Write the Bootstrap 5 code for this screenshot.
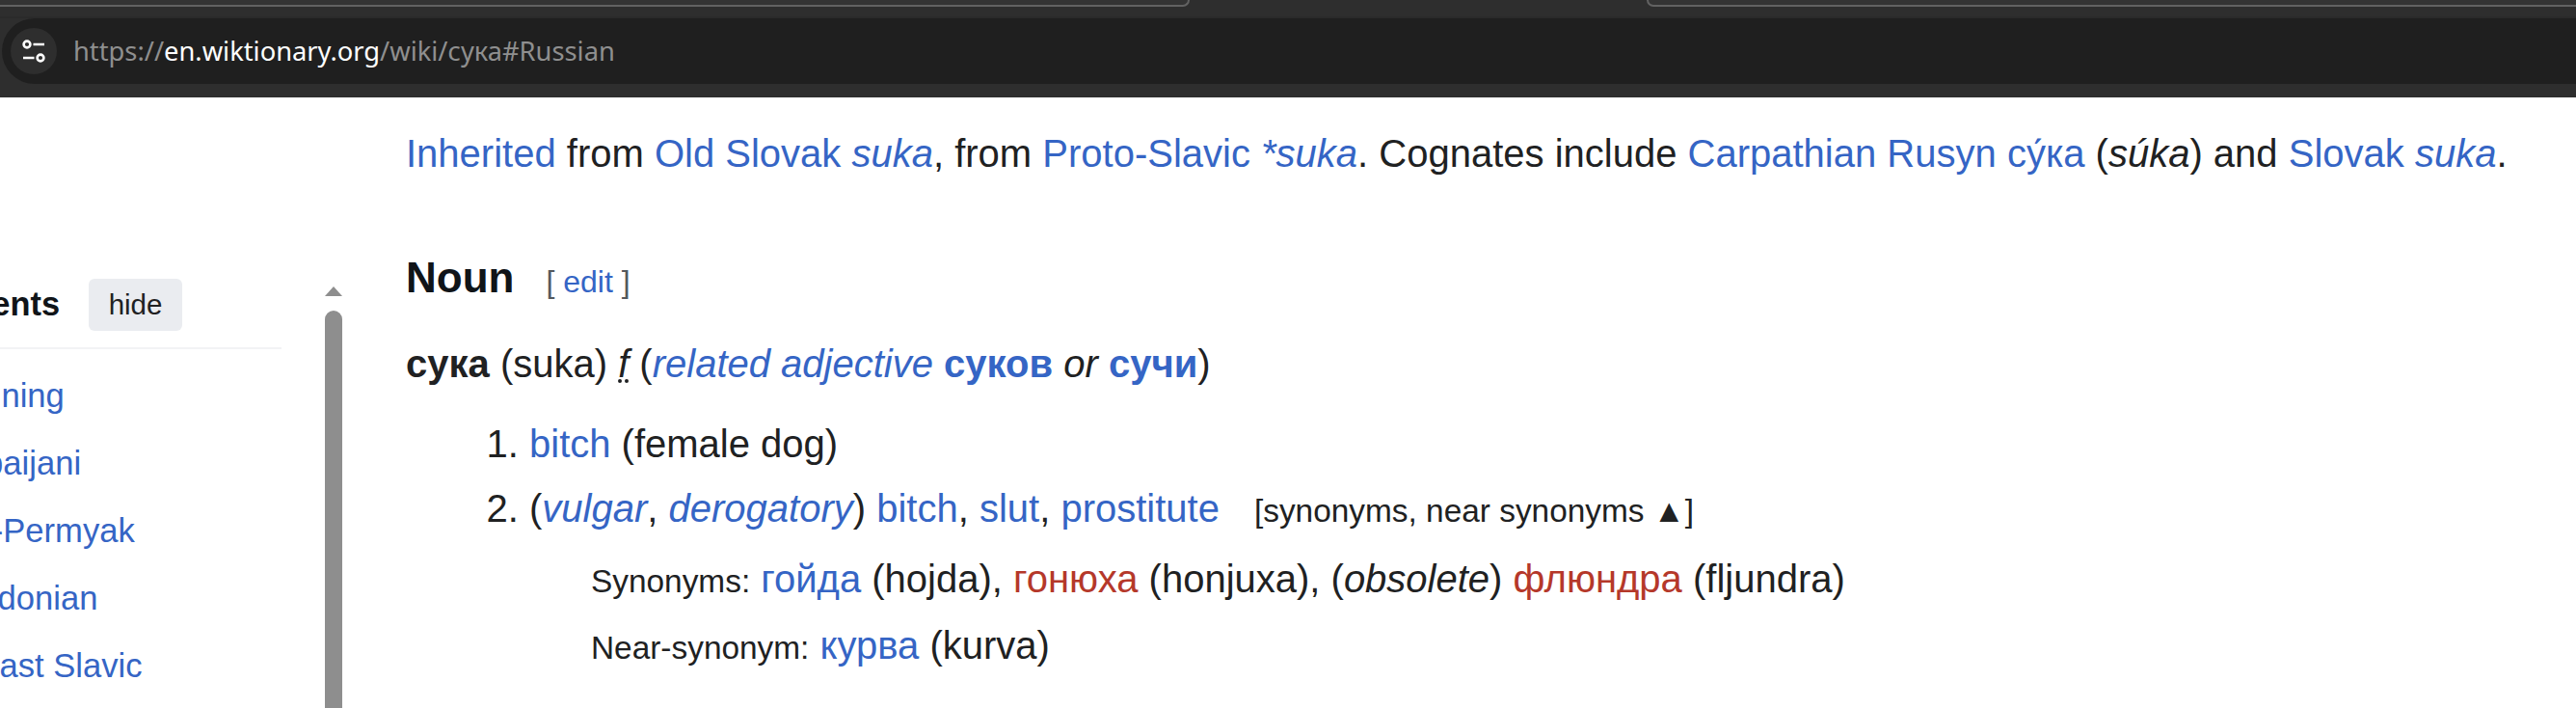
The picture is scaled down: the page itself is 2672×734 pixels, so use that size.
<!DOCTYPE html>
<html lang="en"><head><meta charset="utf-8"><title>сука</title>
<link href="https://cdn.jsdelivr.net/npm/bootstrap@5.3.0/dist/css/bootstrap.min.css" rel="stylesheet">
<style>
html,body{height:734px;overflow:hidden;background:#fff}
body{font-family:"Liberation Sans",Arial,sans-serif;font-size:40px;color:#202122;line-height:50px}
a{text-decoration:none;color:#3565c5}
a.bk-red{color:#b5382a}
.bk-chrome{height:101px;background:#2e2e2e;overflow:hidden}
.bk-tabs{height:19px;border-bottom:2px solid #2a2a2a}
.bk-tab{height:7px;background:#343434;border:2px solid #626262;border-top:0;border-radius:0 0 14px 14px}
.bk-tab-l{width:1264px;margin-left:-30px}
.bk-tab-r{flex:1;margin-right:-30px;margin-left:474px}
.bk-url{height:68px;background:#1f1f1f;border-radius:34px 0 0 34px;margin-left:2px;padding-left:9px}
.bk-tune{width:48px;height:48px;border-radius:50%;background:#2e2e2e;flex:none}
.bk-addr{font-family:"Noto Sans",sans-serif;font-size:27.3px;color:#8f8f8f;margin-left:17px;line-height:1}
.bk-addr b{font-weight:400;color:#fff}
.bk-side{width:421px;height:633px;flex:none;overflow:hidden}
.bk-toc{width:379px;margin-left:-87px;flex:none;font-size:34.6px}
.bk-toc-head{padding-top:188px;padding-bottom:17px;border-bottom:2px solid #f2f3f5;margin-bottom:13px}
.bk-toc-title{font-weight:700;color:#101418;font-size:34.4px;margin-top:-2px}
.bk-hide{width:97px;height:54px;background:#eaecf0;border-radius:6px;border:0;padding:0;font-size:29.5px;color:#202122;margin-left:30px;line-height:54px}
.bk-toc-item{display:block;line-height:70px;white-space:nowrap}
.bk-track{width:18px;margin-left:45px;padding-top:196px;flex:none}
.bk-thumb{height:500px;background:#8e8e8e;border-radius:9px 9px 0 0;margin-top:15px}
.bk-arrow{display:block}
.bk-main{white-space:nowrap}
.bk-etym{padding-top:33px;margin-bottom:79px}
.bk-h2{font-size:44px;font-weight:700;color:#101418;line-height:50px;margin:0 0 35px}
.bk-edit{font-size:32px;font-weight:400;color:#54595d;margin-left:33px}
.bk-head{margin:0 0 33px}
.bk-senses{margin:0;padding-left:128px}
.bk-senses li{margin-bottom:17px}
.bk-gloss{font-size:33.4px;margin-left:36px}
.bk-nym{margin-left:64px;margin-top:20px}
.bk-nym+.bk-nym{margin-top:16px}
.bk-lbl{font-size:33.4px}
</style></head><body>
<header class="bk-chrome">
<div class="bk-tabs d-flex"><div class="bk-tab bk-tab-l"></div><div class="bk-tab bk-tab-r"></div></div>
<div class="bk-url d-flex align-items-center"><span class="bk-tune d-flex align-items-center justify-content-center"><svg width="26" height="24" viewBox="0 0 26 24" fill="none" stroke="#fff" stroke-width="2.6"><circle cx="6" cy="5" r="3.4"/><path d="M12.5 5H24M2 19h11.5"/><circle cx="20" cy="19" r="3.4"/></svg></span><span class="bk-addr">https://<b>en.wiktionary.org</b>/wiki/сука#Russian</span></div>
</header>
<main class="d-flex">
<aside class="bk-side d-flex">
<nav class="bk-toc">
<div class="bk-toc-head d-flex align-items-center"><span class="bk-toc-title">Contents</span><button type="button" class="bk-hide">hide</button></div>
<a class="bk-toc-item" href="#">Beginning</a>
<a class="bk-toc-item" href="#">Azerbaijani</a>
<a class="bk-toc-item" href="#">Komi-Permyak</a>
<a class="bk-toc-item" href="#">Macedonian</a>
<a class="bk-toc-item" href="#">Old East Slavic</a>
</nav>
<div class="bk-track"><svg class="bk-arrow" width="18" height="10" viewBox="0 0 18 10"><path d="M9 0l9 10H0z" fill="#8e8e8e"/></svg><div class="bk-thumb"></div></div>
</aside>
<div class="bk-main">
<p class="bk-etym"><a href="#">Inherited</a> from <a href="#">Old Slovak</a> <a href="#"><i>suka</i></a>, from <a href="#">Proto-Slavic</a> <a href="#"><i>*suka</i></a>. Cognates include <a href="#">Carpathian Rusyn</a> <a href="#">су́ка</a> (<i>súka</i>) and <a href="#">Slovak</a> <a href="#"><i>suka</i></a>.</p>
<h2 class="bk-h2">Noun<span class="bk-edit">[ <a href="#">edit</a> ]</span></h2>
<p class="bk-head"><b>сука</b> (suka) <abbr title="feminine"><i>f</i></abbr> (<a href="#"><i>related adjective</i></a> <a href="#"><b>суков</b></a> <i>or</i> <a href="#"><b>сучи</b></a>)</p>
<ol class="bk-senses">
<li><a href="#">bitch</a> (female dog)</li>
<li>(<a href="#"><i>vulgar</i></a>, <a href="#"><i>derogatory</i></a>) <a href="#">bitch</a>, <a href="#">slut</a>, <a href="#">prostitute</a><span class="bk-gloss">[synonyms, near synonyms ▲]</span>
<div class="bk-nym"><span class="bk-lbl">Synonyms:</span> <a href="#">гойда</a> (hojda), <a class="bk-red" href="#">гонюха</a> (honjuxa), (<i>obsolete</i>) <a class="bk-red" href="#">флюндра</a> (fljundra)</div>
<div class="bk-nym"><span class="bk-lbl">Near-synonym:</span> <a href="#">курва</a> (kurva)</div>
</li>
</ol>
</div>
</main>
</body></html>
